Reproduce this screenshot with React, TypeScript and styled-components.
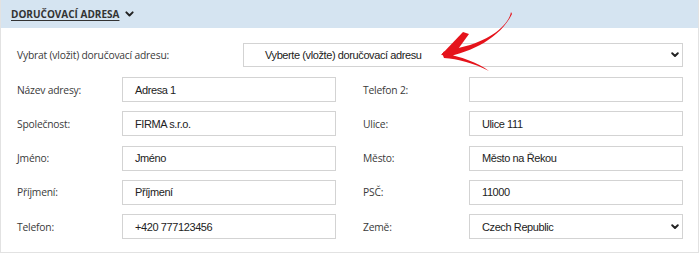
import React from "react";
import styled, { createGlobalStyle } from "styled-components";

const Global = createGlobalStyle`
  html, body { margin: 0; padding: 0; background: #fff; }
  body { font-family: "Open Sans", sans-serif; }
`;

const Stage = styled.div`
  position: relative;
  width: 700px;
  height: 254px;
  overflow: hidden;
`;

const Panel = styled.section`
  width: 697px;
  border: 1px solid #e2e2e2;
  border-top: none;
  background: #fff;
`;

const Header = styled.header`
  height: 28px;
  background: #d5e4f1;
  display: flex;
  align-items: center;
  gap: 6px;
  padding-left: 10px;
`;

const HeaderTitle = styled.span`
  font-family: "Open Sans", sans-serif;
  font-size: 10px;
  font-weight: 700;
  color: #333;
  text-decoration: underline;
  text-underline-offset: 2px;
`;

const Body = styled.div`
  padding: 15px 0 13px 15px;
`;

const TopRow = styled.div`
  display: grid;
  grid-template-columns: 227px 440px;
  align-items: center;
  margin-bottom: 10px;
`;

const Grid = styled.div`
  display: grid;
  grid-template-columns: 106px 214px 26px 107px 214px;
  row-gap: 9.25px;
  align-items: center;
`;

const Label = styled.label`
  font-family: "Open Sans", sans-serif;
  font-size: 10.3px;
  color: #3a3a3a;
  letter-spacing: -0.2px;
  padding-left: 1px;
`;

const Field = styled.div<{ $h?: number }>`
  box-sizing: border-box;
  height: ${(p) => p.$h ?? 25}px;
  border: 1px solid #d3d3d3;
  background: #fff;
  display: flex;
  align-items: center;
  justify-content: space-between;
  padding: 0 3px 0 12px;
  font-family: "Liberation Sans", Arial, sans-serif;
  font-size: 11px;
  color: #222;
  letter-spacing: -0.4px;
`;

const SelectField = styled(Field)`
  padding-left: 21px;
`;

const Spacer = styled.div``;

const Overlay = styled.svg`
  position: absolute;
  left: 0;
  top: 0;
  pointer-events: none;
`;

const Chevron = ({ size = 8, stroke = 2 }: { size?: number; stroke?: number }) => (
  <svg width={size} height={size * 0.7} viewBox="0 0 10 7" fill="none">
    <path d="M1.5 1.5 L5 5 L8.5 1.5" stroke="#222" strokeWidth={stroke * 1.2} strokeLinecap="round" strokeLinejoin="round" />
  </svg>
);

type Row = { l: string; lv: string; r: string; rv: string; rSelect?: boolean };

const rows: Row[] = [
  { l: "Název adresy:", lv: "Adresa 1", r: "Telefon 2:", rv: "" },
  { l: "Společnost:", lv: "FIRMA s.r.o.", r: "Ulice:", rv: "Ulice 111" },
  { l: "Jméno:", lv: "Jméno", r: "Město:", rv: "Město na Řekou" },
  { l: "Příjmení:", lv: "Příjmení", r: "PSČ:", rv: "11000" },
  { l: "Telefon:", lv: "+420 777123456", r: "Země:", rv: "Czech Republic", rSelect: true },
];

export default function App() {
  return (
    <Stage>
      <Global />
      <Panel>
        <Header>
          <HeaderTitle>DORUČOVACÍ ADRESA</HeaderTitle>
          <Chevron size={9} stroke={1.8} />
        </Header>
        <Body>
          <TopRow>
            <Label>Vybrat (vložit) doručovací adresu:</Label>
            <SelectField $h={24}>
              <span>Vyberte (vložte) doručovací adresu</span>
              <Chevron />
            </SelectField>
          </TopRow>
          <Grid>
            {rows.map((r) => (
              <React.Fragment key={r.l}>
                <Label>{r.l}</Label>
                <Field>{r.lv}</Field>
                <Spacer />
                <Label>{r.r}</Label>
                {r.rSelect ? (
                  <Field>
                    <span>{r.rv}</span>
                    <Chevron />
                  </Field>
                ) : (
                  <Field>{r.rv}</Field>
                )}
              </React.Fragment>
            ))}
          </Grid>
        </Body>
      </Panel>
      <Overlay width={700} height={254} viewBox="0 0 700 254">
        <path d="M511 12 C509 24 494 37 470 45 L443 52 L445 57 C472 52 500 38 512 14 Z" fill="#e5131b" />
        <path d="M441 55 L463 32 L469 34 L453 56 Z" fill="#e5131b" />
        <path d="M442 53 C462 57 477 62 489 71 C474 63 458 59 444 58 Z" fill="#e5131b" />
      </Overlay>
    </Stage>
  );
}
